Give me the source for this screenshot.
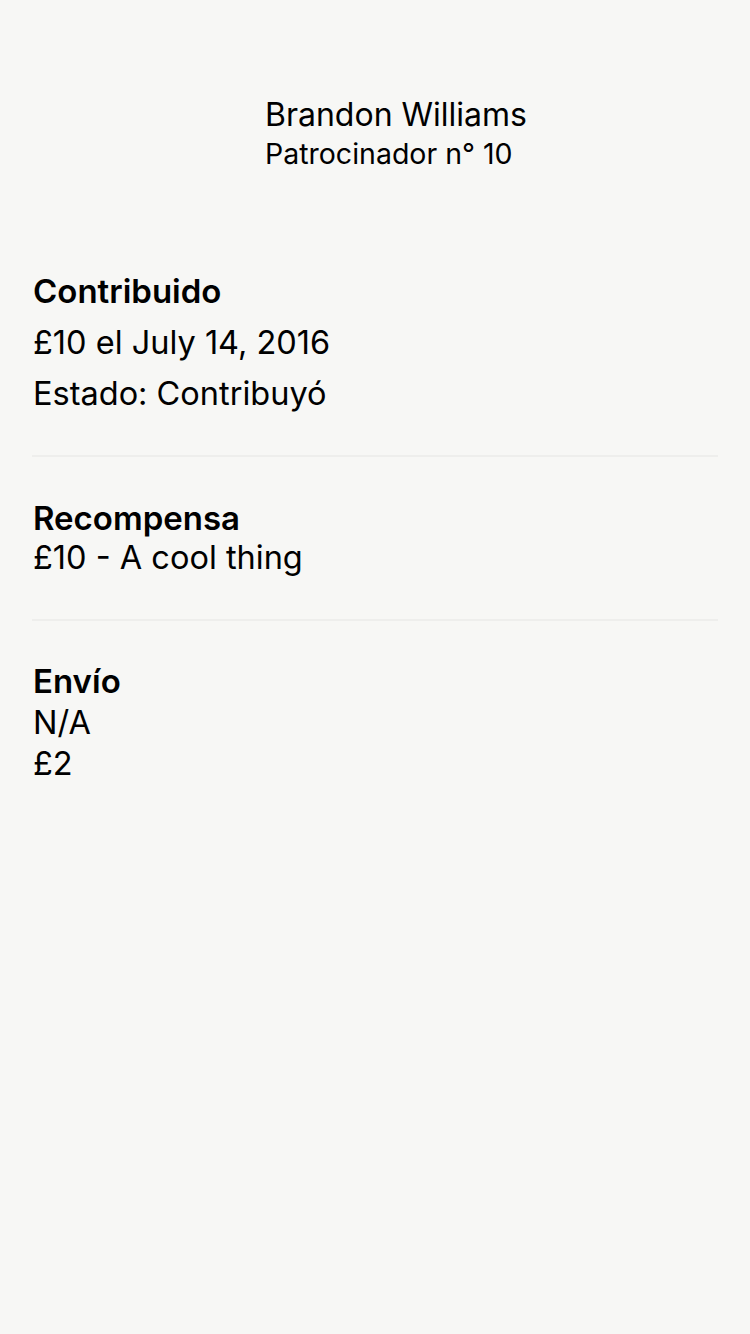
import React from 'react';

const font = { fontFamily: 'Inter, "Noto Sans", sans-serif' };

function Divider() {
  return <div className="mx-[32px] h-[2px] bg-[#eeeeec]" />;
}

export default function App() {
  return (
    <div className="min-h-[1334px] w-[750px] bg-[#f7f7f5] text-black" style={font}>
      {/* Backer header */}
      <div className="pl-[265px] pt-[95px]">
        <div className="text-[32px] leading-[40px]">Brandon Williams</div>
        <div className="text-[28.5px] leading-[38px]">Patrocinador n° 10</div>
      </div>

      {/* Contribution */}
      <div className="px-[33px] pt-[93px] pb-[36px]">
        <div className="text-[33px] font-semibold leading-[51px]">Contribuido</div>
        <div className="text-[32.5px] leading-[51px]">£10 el July 14, 2016</div>
        <div className="text-[32.5px] leading-[51px]">Estado: Contribuyó</div>
      </div>
      <Divider />

      {/* Reward */}
      <div className="px-[33px] pt-[41px] pb-[41px]">
        <div className="text-[33px] font-semibold leading-[40px]">Recompensa</div>
        <div className="text-[32.5px] leading-[40px]">£10 - A cool thing</div>
      </div>
      <Divider />

      {/* Shipping */}
      <div className="px-[33px] pt-[40px]">
        <div className="text-[33px] font-semibold leading-[41px]">Envío</div>
        <div className="text-[32.5px] leading-[41px]">N/A</div>
        <div className="text-[32.5px] leading-[41px]">£2</div>
      </div>
    </div>
  );
}
